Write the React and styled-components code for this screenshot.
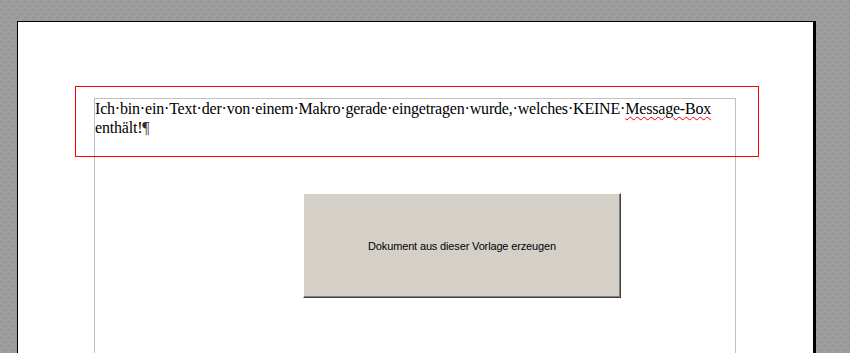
import React from "react";
import styled, { createGlobalStyle } from "styled-components";

const GlobalStyle = createGlobalStyle`
  html, body {
    margin: 0;
    padding: 0;
    height: 100%;
    overflow: hidden;
  }
  body {
    background-color: #9d9d9d;
    background-image: radial-gradient(#8a8a8a 0.6px, transparent 0.8px),
      radial-gradient(#8a8a8a 0.6px, transparent 0.8px);
    background-size: 8px 8px;
    background-position: 1px 2px, 5px 6px;
  }
`;

const Desk = styled.div`
  padding: 21px 0 0 17px;
  height: 353px;
  box-sizing: border-box;
  overflow: hidden;
`;

const Page = styled.div`
  position: relative;
  width: 799px;
  height: 332px;
  background: #fff;
  border-top: 1px solid #000;
  border-left: 1px solid #000;
  border-right: 3px solid #000;
  padding: 76px 0 0 76px;
  box-sizing: border-box;
  overflow: hidden;
`;

// red highlight drawn over the page
const Highlight = styled.div`
  position: absolute;
  left: 57px;
  top: 64px;
  width: 682px;
  height: 69px;
  border: 1px solid #ff0000;
  pointer-events: none;
`;

const TextArea = styled.div`
  width: 640px;
  height: 300px;
  border: 1px solid #c0c0c0;
  border-bottom: none;
`;

const Para = styled.p`
  margin: 0;
  padding: 0;
  font-family: "Liberation Serif", "Times New Roman", serif;
  font-size: 16px;
  line-height: 19px;
  letter-spacing: -0.19px;
  color: #000;
  white-space: nowrap;
`;

const Misspelled = styled.span`
  text-decoration: underline wavy #ff0000;
  text-decoration-thickness: 1px;
  text-underline-offset: 2px;
`;

const Mark = styled.span`
  color: #3a2a2a;
`;

const MacroButton = styled.button`
  display: flex;
  align-items: center;
  justify-content: center;
  margin: 56px 0 0 208px;
  width: 318px;
  height: 105px;
  padding: 0;
  background: #d4d0c8;
  border-style: solid;
  border-width: 1px;
  border-color: #ffffff #404040 #404040 #ffffff;
  box-shadow: inset -1px -1px 0 #808080;
  font-family: "Liberation Sans", Tahoma, Arial, sans-serif;
  font-size: 11px;
  letter-spacing: -0.15px;
  color: #000;
  cursor: default;
`;

export default function App() {
  return (
    <>
      <GlobalStyle />
      <Desk>
        <Page>
          <TextArea>
            <Para>
              Ich·bin·ein·Text·der·von·einem·Makro·gerade·eingetragen·wurde,·welches·KEINE·
              <Misspelled>Message-Box</Misspelled>
              <br />
              enthält!<Mark>¶</Mark>
            </Para>
            <MacroButton type="button">Dokument aus dieser Vorlage erzeugen</MacroButton>
          </TextArea>
          <Highlight />
        </Page>
      </Desk>
    </>
  );
}
